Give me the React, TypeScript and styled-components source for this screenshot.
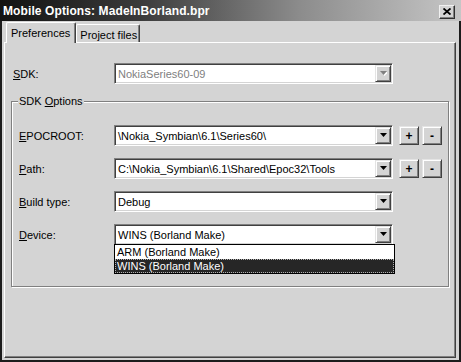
import React from "react";
import styled, { createGlobalStyle, css } from "styled-components";

const FACE = "#d4d4d4";

const GlobalStyle = createGlobalStyle`
  html, body { margin: 0; padding: 0; background: #fff; }
  body { font-family: "Liberation Sans", Arial, sans-serif; font-size: 11px; color: #000; }
  * { box-sizing: border-box; }
`;

const Window = styled.div`
  width: 461px;
  height: 362px;
  display: flex;
  flex-direction: column;
  background: ${FACE};
`;

const TitleBar = styled.div`
  height: 21px;
  flex: none;
  display: flex;
  align-items: center;
  justify-content: space-between;
  padding: 0 6px 0 3px;
  background: linear-gradient(to right, #121212 0%, #3a3a3a 30%, #8c8c8c 65%, #c6c6c6 100%);
`;

const Title = styled.span`
  color: #fff;
  font-weight: bold;
  font-size: 12px;
  letter-spacing: 0.1px;
  white-space: nowrap;
`;

const CloseButton = styled.div`
  width: 16px;
  height: 14px;
  margin-top: 2px;
  display: flex;
  align-items: center;
  justify-content: center;
  background: ${FACE};
  border: 1px solid;
  border-color: #f0f0f0 #303030 #303030 #f0f0f0;
  box-shadow: inset -1px -1px #808080;
`;

const Frame = styled.div`
  flex: 1;
  display: flex;
  flex-direction: column;
  border: 2px solid #1c1c1c;
  border-top: 0;
  padding: 1px 3px 2px 2px;
`;

const TabStrip = styled.div`
  height: 20px;
  flex: none;
  display: flex;
  align-items: flex-end;
  padding-left: 2px;
  position: relative;
  z-index: 1;
`;

const Tab = styled.div<{ $active?: boolean }>`
  display: flex;
  align-items: center;
  background: ${FACE};
  border-top: 1px solid #fff;
  border-left: 1px solid #fff;
  border-right: 1px solid #404040;
  border-top-left-radius: 2px;
  border-top-right-radius: 2px;
  box-shadow: inset -1px 0 #808080;
  white-space: nowrap;
  ${(p) =>
    p.$active
      ? css`
          height: 21px;
          margin-bottom: -1px;
          padding: 0 5px 0 4px;
        `
      : css`
          height: 18px;
          padding: 2px 2px 0 3px;
        `}
`;

const Panel = styled.div`
  flex: 1;
  display: flex;
  flex-direction: column;
  border-top: 1px solid #fff;
  border-left: 1px solid #fff;
  border-right: 1px solid #404040;
  border-bottom: 1px solid #404040;
  box-shadow: inset -1px -1px #808080;
  padding: 20px 5px 0 6px;
`;

const Row = styled.div<{ $inset?: number }>`
  display: flex;
  align-items: center;
  height: 21px;
  padding-left: ${(p) => p.$inset ?? 0}px;
`;

const Label = styled.span<{ $width: number }>`
  width: ${(p) => p.$width}px;
  flex: none;
  white-space: nowrap;
`;

const Group = styled.fieldset`
  margin: 11px 1px 0 0;
  padding: 0 0 41px 7px;
  min-width: 0;
  border: 1px solid #808080;
  box-shadow: inset 1px 1px #fff, 1px 1px #fff;
  display: flex;
  flex-direction: column;
  gap: 12px;
`;

const Legend = styled.legend`
  padding: 0 1px;
  margin-left: -1px;
  line-height: 13px;
  background: ${FACE};
  margin-bottom: 17px;
`;

const Combo = styled.div<{ $width?: number }>`
  position: relative;
  flex: none;
  display: flex;
  align-items: center;
  width: ${(p) => p.$width ?? 279}px;
  height: 21px;
  background: #fff;
  border: 1px solid;
  border-color: #808080 #fff #fff #808080;
  box-shadow: inset 1px 1px #404040, inset -1px -1px ${FACE};
  padding: 1px;
`;

const ComboText = styled.span<{ $disabled?: boolean }>`
  flex: 1;
  padding-left: 2px;
  white-space: nowrap;
  overflow: hidden;
  color: ${(p) => (p.$disabled ? "#808080" : "#000")};
`;

const RaisedBox = css`
  display: flex;
  align-items: center;
  justify-content: center;
  background: ${FACE};
  border: 1px solid;
  border-color: #e4e4e4 #404040 #404040 #e4e4e4;
  box-shadow: inset 1px 1px #fff, inset -1px -1px #808080;
`;

const DropButton = styled.div`
  ${RaisedBox};
  width: 16px;
  height: 17px;
  flex: none;
`;

const SideButtons = styled.div`
  display: flex;
  gap: 3px;
  margin-left: 6px;
`;

const SmallButton = styled.div`
  ${RaisedBox};
  width: 20px;
  height: 19px;
  font-weight: bold;
  font-size: 12px;
`;

const DropList = styled.div`
  position: absolute;
  top: 100%;
  left: -1px;
  width: 281px;
  background: #fff;
  border: 1px solid #000;
  z-index: 2;
`;

const ListItem = styled.div<{ $selected?: boolean }>`
  height: 14px;
  line-height: 14px;
  padding-left: 2px;
  white-space: nowrap;
  ${(p) =>
    p.$selected &&
    css`
      background: #262626;
      color: #fff;
      outline: 1px dotted #b0b0b0;
      outline-offset: -1px;
    `}
`;

const Arrow = ({ disabled }: { disabled?: boolean }) => (
  <svg width="7" height="5" viewBox="0 0 7 5">
    {disabled && <polygon points="1,1 8,1 4.5,5" fill="#fff" />}
    <polygon points="0,0 7,0 3.5,4" fill={disabled ? "#808080" : "#000"} />
  </svg>
);

const CloseGlyph = () => (
  <svg width="8" height="7" viewBox="0 0 8 7">
    <path d="M0.5 0.5 L7.5 6.5 M7.5 0.5 L0.5 6.5" stroke="#000" strokeWidth="1.8" />
  </svg>
);

type ComboProps = { value: string; disabled?: boolean; children?: React.ReactNode };

const ComboBox = ({ value, disabled, children }: ComboProps) => (
  <Combo>
    <ComboText $disabled={disabled}>{value}</ComboText>
    <DropButton>
      <Arrow disabled={disabled} />
    </DropButton>
    {children}
  </Combo>
);

const AddRemove = () => (
  <SideButtons>
    <SmallButton>+</SmallButton>
    <SmallButton>-</SmallButton>
  </SideButtons>
);

export default function App() {
  return (
    <>
      <GlobalStyle />
      <Window>
        <TitleBar>
          <Title>Mobile Options: MadeInBorland.bpr</Title>
          <CloseButton>
            <CloseGlyph />
          </CloseButton>
        </TitleBar>
        <Frame>
          <TabStrip>
            <Tab $active>Preferences</Tab>
            <Tab>Project files</Tab>
          </TabStrip>
          <Panel>
            <Row $inset={2}>
              <Label $width={101}>
                <u>S</u>DK:
              </Label>
              <ComboBox value="NokiaSeries60-09" disabled />
            </Row>
            <Group>
              <Legend>
                SDK <u>O</u>ptions
              </Legend>
              <Row>
                <Label $width={95}>
                  <u>E</u>POCROOT:
                </Label>
                <ComboBox value="\Nokia_Symbian\6.1\Series60\" />
                <AddRemove />
              </Row>
              <Row>
                <Label $width={95}>
                  <u>P</u>ath:
                </Label>
                <ComboBox value="C:\Nokia_Symbian\6.1\Shared\Epoc32\Tools" />
                <AddRemove />
              </Row>
              <Row>
                <Label $width={95}>
                  <u>B</u>uild type:
                </Label>
                <ComboBox value="Debug" />
              </Row>
              <Row>
                <Label $width={95}>
                  <u>D</u>evice:
                </Label>
                <ComboBox value="WINS (Borland Make)">
                  <DropList>
                    <ListItem>ARM (Borland Make)</ListItem>
                    <ListItem $selected>WINS (Borland Make)</ListItem>
                  </DropList>
                </ComboBox>
              </Row>
            </Group>
          </Panel>
        </Frame>
      </Window>
    </>
  );
}
